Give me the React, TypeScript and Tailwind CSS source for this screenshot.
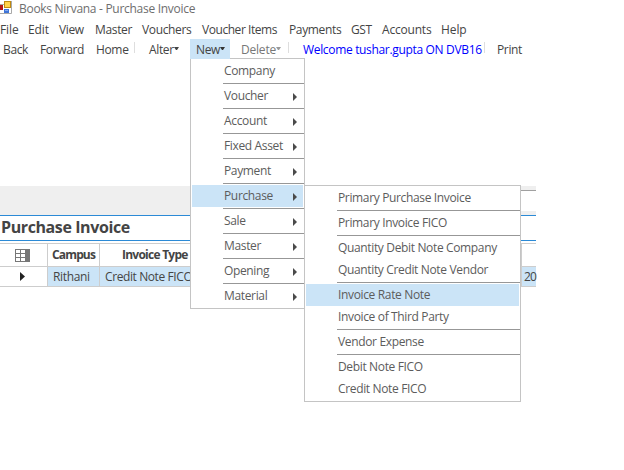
import { Fragment } from "react";

type Entry = { label: string; arrow?: boolean; active?: boolean; sep?: boolean };

const newMenu: Entry[] = [
  { label: "Company", sep: true },
  { label: "Voucher", arrow: true, sep: true },
  { label: "Account", arrow: true, sep: true },
  { label: "Fixed Asset", arrow: true, sep: true },
  { label: "Payment", arrow: true, sep: true },
  { label: "Purchase", arrow: true, active: true, sep: true },
  { label: "Sale", arrow: true, sep: true },
  { label: "Master", arrow: true, sep: true },
  { label: "Opening", arrow: true, sep: true },
  { label: "Material", arrow: true },
];

const purchaseMenu: Entry[] = [
  { label: "Primary Purchase Invoice", sep: true },
  { label: "Primary Invoice FICO", sep: true },
  { label: "Quantity Debit Note Company" },
  { label: "Quantity Credit Note Vendor", sep: true },
  { label: "Invoice Rate Note", active: true },
  { label: "Invoice of Third Party", sep: true },
  { label: "Vendor Expense", sep: true },
  { label: "Debit Note FICO" },
  { label: "Credit Note FICO" },
];

function Caret({ color }: { color: string }) {
  return (
    <svg width="5" height="3" viewBox="0 0 5 3" className="mt-[6px] shrink-0">
      <path d="M0 0h5L3 3H2z" fill={color} />
    </svg>
  );
}

function Menu({ items, className }: { items: Entry[]; className: string }) {
  return (
    <div className={`absolute border border-[#c4c4c4] bg-white py-px text-[#5c5c5c] ${className}`}>
      {items.map((item) => (
        <Fragment key={item.label}>
          <div
            className={`mx-px flex h-[22px] items-start justify-between pl-8 pr-[6px] pt-[2px] ${item.active ? "bg-[#cbe4f7]" : ""}`}
          >
            <span>{item.label}</span>
            {item.arrow && (
              <svg width="4" height="8" viewBox="0 0 4 8" className="mt-[6px]">
                <path d="M0 0l4 4-4 4z" fill="#4a4a4a" />
              </svg>
            )}
          </div>
          {item.sep && <div className="my-px ml-8 h-px bg-[#979797]" />}
        </Fragment>
      ))}
    </div>
  );
}

export default function App() {
  return (
    <div className="relative h-[470px] w-[624px] overflow-hidden whitespace-nowrap bg-white font-['Open_Sans','Noto_Sans',sans-serif] text-[12px] leading-[17px] tracking-[-0.35px] text-[#444]">
      <header className="flex h-[18px] items-start text-[#6e6e6e]">
        <svg width="12" height="14" viewBox="0 0 12 14">
          <path d="M0 4.500h4M11.500 1v12.500H0" fill="none" stroke="#a9a9a9" />
          <path d="M0 5h3v5H0z" fill="#b51515" />
          <path d="M4 1h7v7H4z" fill="#c08a10" />
          <path d="M5 2h5v5H5z" fill="#ffd34a" />
          <path d="M4 9h5v4H4z" fill="#3f74d8" />
          <path d="M5 10h3v1H5z" fill="#82aaf0" />
        </svg>
        <span className="ml-[7px] tracking-[-0.29px]">Books Nirvana - Purchase Invoice</span>
      </header>

      <nav className="flex h-[21px] items-start pt-[3px]">
        <span className="w-7 tracking-[-0.1px]">File</span>
        <span className="w-[31px] tracking-[-0.1px]">Edit</span>
        <span className="w-9">View</span>
        <span className="w-[47px]">Master</span>
        <span className="w-[60px]">Vouchers</span>
        <span className="w-[87px] tracking-[-0.45px]">Voucher Items</span>
        <span className="w-[62px]">Payments</span>
        <span className="w-[31px]">GST</span>
        <span className="w-[59px] tracking-[-0.2px]">Accounts</span>
        <span className="tracking-[-0.1px]">Help</span>
      </nav>

      <div className="flex h-[19px] items-start pl-[3px] pt-[2px]">
        <span className="w-[37px]">Back</span>
        <span className="w-14">Forward</span>
        <span className="w-[38px]">Home</span>
        <span className="mt-px h-[11px] w-px bg-[#dedede]" />
        <span className="ml-[14px] flex w-[41px] items-start">Alter<Caret color="#444" /></span>
        <span className="-mt-[2px] flex h-[19px] w-10 items-start bg-[#cbe4f7] pl-[6px] pt-[2px]">New<Caret color="#333" /></span>
        <span className="ml-[11px] flex w-[47px] items-start tracking-[-0.2px] text-[#777]">Delete<Caret color="#999" /></span>
        <span className="mt-px h-[11px] w-px bg-[#dedede]" />
        <span className="ml-[14px] w-[181px] tracking-[-0.33px] text-[#0000ff]">Welcome tushar.gupta ON DVB16</span>
        <span className="mt-px h-[11px] w-px bg-[#dedede]" />
        <span className="ml-3">Print</span>
      </div>

      <main className="mt-[128px] w-[536px]">
        <div className="flex h-[29px] justify-end bg-[#efefef]">
          <div className="mt-1 h-[21px] w-4 border-t border-[#a0a0a0] bg-white" />
        </div>
        <h1 className="h-[26px] border-y border-[#2b8ad6] pl-px text-[16px] font-bold leading-[22px] tracking-[-0.4px] text-[#444]">Purchase Invoice</h1>
        <div className="mt-[2px] grid h-11 grid-cols-[48px_52px_422px_14px] grid-rows-[23px_20px] border-t border-[#cdcdcd]">
          <div className="flex items-center border-b border-r border-[#cdcdcd] pl-[15px]">
            <svg width="15" height="13" viewBox="0 0 15 13" shapeRendering="crispEdges">
              <path d="M0 0h15v13H0z" fill="#777" />
              <path d="M1 1h4v3H1zM6 1h4v3H6zM1 5h4v3H1zM6 5h4v3H6zM1 9h4v3H1zM6 9h4v3H6z" fill="#fff" />
            </svg>
          </div>
          <div className="border-b border-r border-[#cdcdcd] pl-1 pt-[2px] font-bold tracking-[-0.85px]">Campus</div>
          <div className="border-b border-r border-[#cdcdcd] pl-[22px] pt-[2px] font-bold tracking-[-0.75px]">Invoice Type</div>
          <div className="border-b border-[#cdcdcd]" />
          <div className="flex items-center border-b border-r border-[#cdcdcd] pl-5">
            <svg width="5" height="9" viewBox="0 0 5 9">
              <path d="M0 0l5 4.500-5 4.500z" fill="#222" />
            </svg>
          </div>
          <div className="border-b border-r border-[#cdcdcd] bg-[#cbe4f7] pl-[5px] pt-px">Rithani</div>
          <div className="border-b border-r border-[#cdcdcd] bg-[#cbe4f7] pl-[5px] pt-px tracking-[-0.4px]">Credit Note FICO</div>
          <div className="border-b border-[#cdcdcd] bg-[#cbe4f7] pl-[2px] pt-px tracking-[-0.9px]">20</div>
        </div>
      </main>

      <Menu items={newMenu} className="left-[190px] top-[58px] w-[115px]" />
      <div className="absolute left-[190px] top-[58px] h-px w-10 bg-[#cbe4f7]" />
      <Menu items={purchaseMenu} className="left-[304px] top-[185px] w-[217px]" />
    </div>
  );
}
